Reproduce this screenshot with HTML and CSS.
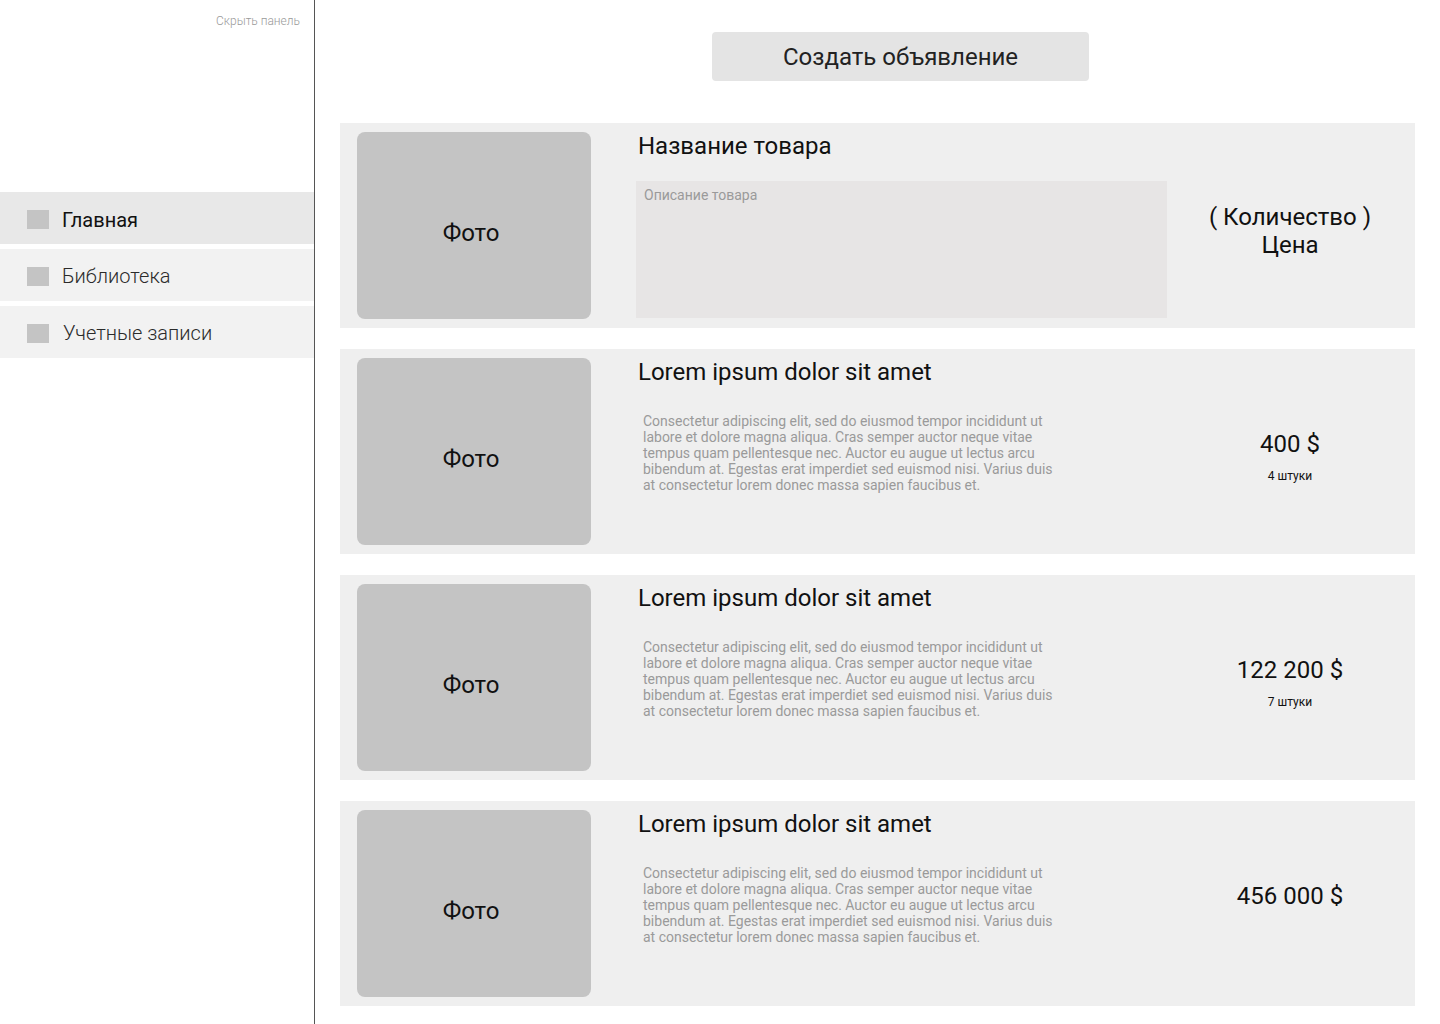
FILE: index.html
```html
<!DOCTYPE html>
<html lang="ru">
<head>
<meta charset="utf-8">
<title>Объявления</title>
<link rel="stylesheet" href="styles.css">
</head>
<body>
<div class="app">
  <aside class="sidebar">
    <div class="hide-row"><span class="hide">Скрыть панель</span></div>
    <nav class="nav">
      <div class="nav-item active"><span class="nav-icon"></span><span class="nav-text">Главная</span></div>
      <div class="nav-item"><span class="nav-icon"></span><span class="nav-text">Библиотека</span></div>
      <div class="nav-item"><span class="nav-icon"></span><span class="nav-text nav-text-2">Учетные записи</span></div>
    </nav>
  </aside>
  <main class="main">
    <div class="btn">Создать объявление</div>
    <div class="cards">
      <div class="card">
        <div class="photo">Фото</div>
        <div class="content">
          <div class="title">Название товара</div>
          <div class="desc-box">Описание товара</div>
        </div>
        <div class="price-col price-col-first">
          <div class="price">( Количество )<br>Цена</div>
        </div>
      </div>
      <div class="card">
        <div class="photo">Фото</div>
        <div class="content">
          <div class="title">Lorem ipsum dolor sit amet</div>
          <p class="desc">Consectetur adipiscing elit, sed do eiusmod tempor incididunt ut<br>labore et dolore magna aliqua. Cras semper auctor neque vitae<br>tempus quam pellentesque nec. Auctor eu augue ut lectus arcu<br>bibendum at. Egestas erat imperdiet sed euismod nisi. Varius duis<br>at consectetur lorem donec massa sapien faucibus et.</p>
        </div>
        <div class="price-col">
          <div class="price">400 $</div>
          <div class="qty">4 штуки</div>
        </div>
      </div>
      <div class="card">
        <div class="photo">Фото</div>
        <div class="content">
          <div class="title">Lorem ipsum dolor sit amet</div>
          <p class="desc">Consectetur adipiscing elit, sed do eiusmod tempor incididunt ut<br>labore et dolore magna aliqua. Cras semper auctor neque vitae<br>tempus quam pellentesque nec. Auctor eu augue ut lectus arcu<br>bibendum at. Egestas erat imperdiet sed euismod nisi. Varius duis<br>at consectetur lorem donec massa sapien faucibus et.</p>
        </div>
        <div class="price-col">
          <div class="price">122 200 $</div>
          <div class="qty">7 штуки</div>
        </div>
      </div>
      <div class="card">
        <div class="photo">Фото</div>
        <div class="content">
          <div class="title">Lorem ipsum dolor sit amet</div>
          <p class="desc">Consectetur adipiscing elit, sed do eiusmod tempor incididunt ut<br>labore et dolore magna aliqua. Cras semper auctor neque vitae<br>tempus quam pellentesque nec. Auctor eu augue ut lectus arcu<br>bibendum at. Egestas erat imperdiet sed euismod nisi. Varius duis<br>at consectetur lorem donec massa sapien faucibus et.</p>
        </div>
        <div class="price-col">
          <div class="price">456 000 $</div>
        </div>
      </div>
    </div>
  </main>
</div>
</body>
</html>
```

FILE: styles.css
```css
* { box-sizing: border-box; }
html, body {
  margin: 0;
  padding: 0;
  background: #ffffff;
  font-family: Roboto, "Noto Sans", "Liberation Sans", sans-serif;
  color: #111;
}
.app {
  display: flex;
  width: 1440px;
  height: 1024px;
  overflow: hidden;
}
.sidebar {
  width: 315px;
  flex: none;
  border-right: 1px solid #555;
  height: 1024px;
}
.hide-row {
  display: flex;
  justify-content: flex-end;
  padding: 13px 14px 0 0;
  height: 192px;
}
.hide {
  font-size: 12px;
  line-height: 16px;
  font-weight: 300;
  color: #9a9a9a;
}
.nav {
  display: flex;
  flex-direction: column;
  gap: 5px;
}
.nav-item {
  height: 52px;
  display: flex;
  align-items: center;
  background: #f2f2f2;
  padding: 2px 0 0 27px;
}
.nav-item.active {
  background: #e8e8e8;
  padding-top: 4px;
}
.nav-icon {
  width: 22px;
  height: 19px;
  background: #c4c4c4;
  margin-right: 13px;
  flex: none;
}
.nav-item.active .nav-icon {
  margin-top: -2px;
}
.nav-text {
  font-size: 20px;
  line-height: 24px;
  color: #2b2b2b;
  font-weight: 300;
}
.nav-item.active .nav-text {
  color: #111;
  font-weight: 400;
}
.nav-text-2 { margin-left: 1px; }
.main {
  flex: 1;
  display: flex;
  flex-direction: column;
  padding-top: 32px;
}
.btn {
  margin-left: 397px;
  width: 377px;
  height: 49px;
  padding-top: 1px;
  background: #e4e4e4;
  border-radius: 4px;
  display: flex;
  align-items: center;
  justify-content: center;
  font-size: 24px;
  color: #222;
}
.cards {
  margin: 42px 0 0 25px;
  width: 1075px;
  display: flex;
  flex-direction: column;
  gap: 21px;
}
.card {
  display: flex;
  background: #efefef;
  height: 205px;
  padding: 9px 0 9px 17px;
}
.photo {
  width: 234px;
  height: 187px;
  flex: none;
  background: #c4c4c4;
  border-radius: 8px;
  display: flex;
  align-items: center;
  justify-content: center;
  padding: 14px 6px 0 0;
  font-size: 24px;
  color: #111;
}
.content {
  width: 531px;
  flex: none;
  margin-left: 45px;
  display: flex;
  flex-direction: column;
}
.title {
  padding-left: 2px;
  font-size: 24px;
  line-height: 28px;
  color: #111;
}
.desc-box {
  margin-top: 21px;
  height: 137px;
  background: #e7e5e5;
  padding: 6px 8px;
  font-size: 14px;
  line-height: 16px;
  color: #9a9a9a;
}
.desc {
  margin: 27px 0 0 0;
  padding-left: 7px;
  font-size: 14px;
  line-height: 16px;
  color: #9a9a9a;
}
.price-col {
  flex: 1;
  display: flex;
  flex-direction: column;
  align-items: center;
  padding: 72px 2px 0 0;
}
.price-col-first {
  padding-top: 71px;
}
.price {
  font-size: 24px;
  line-height: 28px;
  color: #111;
  text-align: center;
}
.qty {
  margin-top: 11px;
  font-size: 12px;
  line-height: 14px;
  color: #111;
}
```
